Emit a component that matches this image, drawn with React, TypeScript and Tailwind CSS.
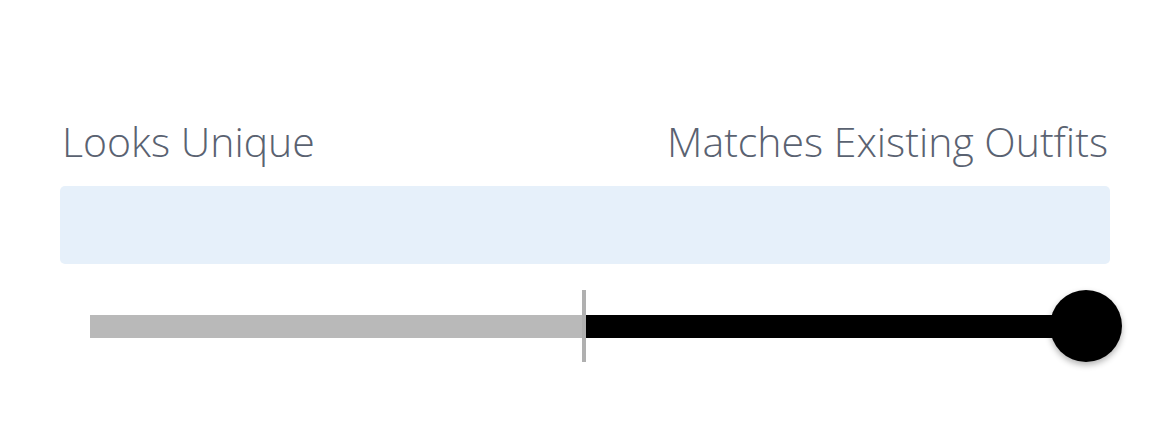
export default function App() {
  return (
    <div className="w-[1170px] h-[448px] bg-white px-[60px] pt-[111px]" style={{ fontFamily: '"Open Sans", "Noto Sans", sans-serif' }}>
      {/* range labels */}
      <div className="flex justify-between items-baseline text-[41px] font-light leading-[60px] text-[#5a6271] pl-[2px] pr-[2px]">
        <span>Looks Unique</span>
        <span>Matches Existing Outfits</span>
      </div>
      {/* preview panel */}
      <div className="mt-[15px] h-[78px] rounded-[5px] bg-[#e6f0fa]" />
      {/* slider track */}
      <div className="mt-[26px] flex items-center h-[72px] pl-[30px] -mr-[12px]">
        <div className="h-[23px] w-[492px] bg-[#b9b9b9]" />
        <div className="h-[72px] w-[4px] bg-[#b0b0b0]" />
        <div className="h-[23px] flex-1 bg-black" />
        <div className="-ml-[36px] h-[72px] w-[72px] shrink-0 rounded-full bg-black shadow-[0_3px_6px_rgba(0,0,0,0.3)]" />
      </div>
    </div>
  );
}
